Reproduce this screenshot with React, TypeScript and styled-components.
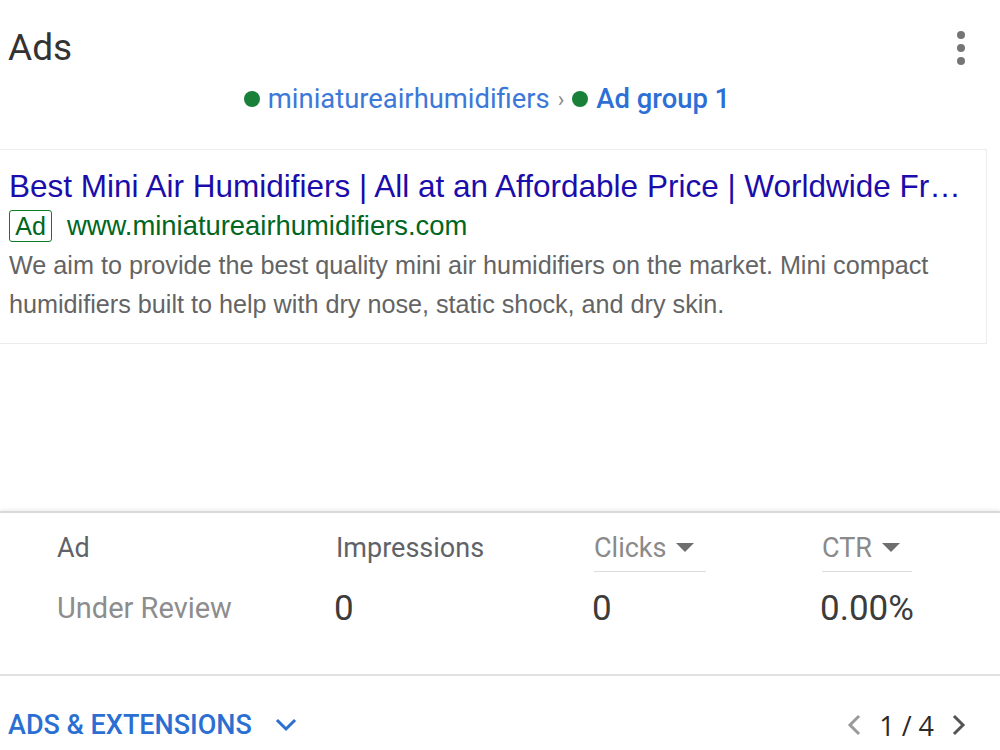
import React from "react";
import styled, { createGlobalStyle } from "styled-components";

const GlobalStyle = createGlobalStyle`
  html, body {
    margin: 0;
    padding: 0;
    background: #ffffff;
  }
  body {
    font-family: Roboto, "Liberation Sans", Arial, sans-serif;
    overflow: hidden;
  }
`;

const Page = styled.div`
  width: 1000px;
  height: 750px;
  display: flex;
  flex-direction: column;
  overflow: hidden;
`;

const Header = styled.div`
  display: flex;
  align-items: center;
  justify-content: space-between;
  height: 66px;
  padding: 14px 35px 0 8px;
`;

const Title = styled.h1`
  margin: 0;
  font-size: 37px;
  font-weight: 400;
  color: #333333;
`;

const Kebab = styled.div`
  display: flex;
  flex-direction: column;
  gap: 5px;
  padding-top: 2px;
`;

const Dot = styled.span<{ color?: string; size?: number }>`
  display: block;
  width: ${(p) => p.size ?? 8}px;
  height: ${(p) => p.size ?? 8}px;
  border-radius: 50%;
  background: ${(p) => p.color ?? "#757575"};
`;

const Crumbs = styled.div`
  display: flex;
  align-items: center;
  justify-content: center;
  gap: 8px;
  height: 38px;
  padding-right: 26px;
  font-size: 27.4px;
  color: #3c78d8;
`;

const Crumb = styled.span<{ strong?: boolean }>`
  font-weight: ${(p) => (p.strong ? 500 : 400)};
  color: ${(p) => (p.strong ? "#2e6fd6" : "#3c78d8")};
`;

const Sep = styled.span`
  color: #888;
  font-size: 22px;
`;

const AdCard = styled.div`
  margin: 31px 13px 0 -1px;
  height: 195px;
  box-sizing: border-box;
  border: 1px solid #ececec;
  padding: 17px 0 0 9px;
  font-family: "Liberation Sans", Arial, sans-serif;
`;

const AdTitle = styled.div`
  font-size: 31.5px;
  color: #1a0dab;
  white-space: nowrap;
  line-height: 38px;
`;

const UrlRow = styled.div`
  display: flex;
  align-items: center;
  gap: 15px;
  margin-top: 5px;
  line-height: 32px;
`;

const Badge = styled.span`
  box-sizing: border-box;
  height: 32px;
  width: 43px;
  border: 1px solid #0b7c2a;
  border-radius: 3px;
  color: #006621;
  font-size: 25px;
  line-height: 30px;
  text-align: center;
`;

const Url = styled.span`
  font-size: 27.4px;
  color: #006621;
`;

const Description = styled.p`
  margin: 4px 0 0;
  font-size: 25.2px;
  line-height: 39px;
  color: #646464;
  padding-right: 40px;
`;

const Spacer = styled.div`
  flex: 1;
`;

const Metrics = styled.div`
  height: 163px;
  box-sizing: border-box;
  border-top: 2px solid #d9d9d9;
  box-shadow: 0 -2px 3px rgba(0, 0, 0, 0.06);
  display: grid;
  grid-template-columns: 279px 258px 228px 1fr;
  grid-template-rows: 70px 50px;
  padding-left: 57px;
`;

const HeadCell = styled.div`
  display: flex;
  align-items: center;
  font-size: 27px;
  color: #5f6368;
`;

const SortHead = styled.div<{ width: number }>`
  display: flex;
  align-items: center;
  gap: 10px;
  width: ${(p) => p.width}px;
  height: 48px;
  margin-top: 11px;
  box-sizing: border-box;
  border-bottom: 1px solid #dcdcdc;
  font-size: 27px;
  color: #8a8a8a;
`;

const Caret = styled.span`
  width: 0;
  height: 0;
  border-left: 9px solid transparent;
  border-right: 9px solid transparent;
  border-top: 9px solid #6f6f6f;
`;

const ValueCell = styled.div<{ muted?: boolean }>`
  display: flex;
  align-items: center;
  font-size: ${(p) => (p.muted ? 29 : 35)}px;
  color: ${(p) => (p.muted ? "#8d8d8d" : "#3c3c3c")};
  margin-left: ${(p) => (p.muted ? 0 : -2)}px;
`;

const Footer = styled.div`
  border-top: 2px solid #e2e2e2;
  height: 76px;
  display: flex;
  align-items: center;
  justify-content: space-between;
  padding: 24px 30px 0 8px;
  box-sizing: border-box;
`;

const Expand = styled.div`
  display: flex;
  align-items: center;
  gap: 22px;
  font-size: 27px;
  font-weight: 500;
  color: #2b6fd2;
`;

const Pager = styled.div`
  display: flex;
  align-items: center;
  gap: 12px;
  font-size: 27px;
  color: #2a2a2a;
  font-family: "Open Sans", Roboto, sans-serif;
`;

const Chevron = ({ dir, color }: { dir: "left" | "right" | "down"; color: string }) => {
  const d =
    dir === "down"
      ? "M4 8 L12 16 L20 8"
      : dir === "left"
      ? "M15 4 L7 12 L15 20"
      : "M9 4 L17 12 L9 20";
  return (
    <svg width="24" height="24" viewBox="0 0 24 24">
      <path d={d} fill="none" stroke={color} strokeWidth="3" strokeLinecap="square" />
    </svg>
  );
};

const App = () => {
  return (
    <Page>
      <GlobalStyle />
      <Header>
        <Title>Ads</Title>
        <Kebab>
          <Dot />
          <Dot />
          <Dot />
        </Kebab>
      </Header>
      <Crumbs>
        <Dot color="#188038" size={16} />
        <Crumb>miniatureairhumidifiers</Crumb>
        <Sep>›</Sep>
        <Dot color="#188038" size={16} />
        <Crumb strong>Ad group 1</Crumb>
      </Crumbs>
      <AdCard>
        <AdTitle>Best Mini Air Humidifiers | All at an Affordable Price | Worldwide Fr…</AdTitle>
        <UrlRow>
          <Badge>Ad</Badge>
          <Url>www.miniatureairhumidifiers.com</Url>
        </UrlRow>
        <Description>
          We aim to provide the best quality mini air humidifiers on the market. Mini compact
          humidifiers built to help with dry nose, static shock, and dry skin.
        </Description>
      </AdCard>
      <Spacer />
      <Metrics>
        <HeadCell>Ad</HeadCell>
        <HeadCell>Impressions</HeadCell>
        <SortHead width={112}>
          Clicks <Caret />
        </SortHead>
        <SortHead width={90}>
          CTR <Caret />
        </SortHead>
        <ValueCell muted>Under Review</ValueCell>
        <ValueCell>0</ValueCell>
        <ValueCell>0</ValueCell>
        <ValueCell>0.00%</ValueCell>
      </Metrics>
      <Footer>
        <Expand>
          ADS &amp; EXTENSIONS
          <Chevron dir="down" color="#2b6fd2" />
        </Expand>
        <Pager>
          <Chevron dir="left" color="#9a9a9a" />
          1 / 4
          <Chevron dir="right" color="#555" />
        </Pager>
      </Footer>
    </Page>
  );
};

export default App;
